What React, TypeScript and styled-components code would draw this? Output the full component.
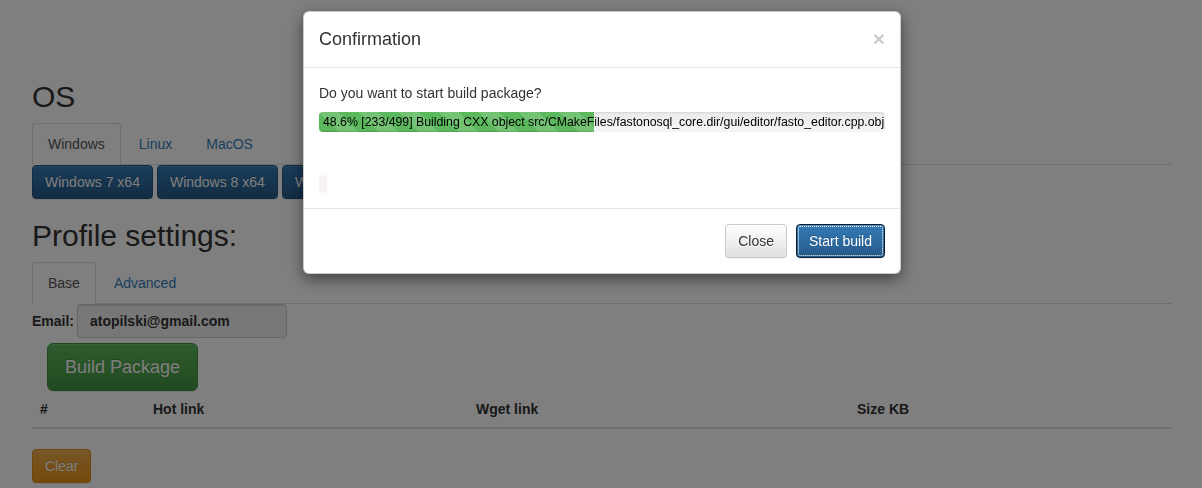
import React from "react";
import styled, { createGlobalStyle, css } from "styled-components";

const Global = createGlobalStyle`
  html, body { margin: 0; padding: 0; }
  body {
    font-family: "Liberation Sans", Arial, Helvetica, sans-serif;
    font-size: 14px;
    line-height: 1.42857143;
    color: #333;
    background: #fff;
    overflow: hidden;
  }
  * { box-sizing: border-box; }
`;

const Page = styled.div`
  padding-top: 60px;
  height: 488px;
`;

const Container = styled.div`
  width: 1140px;
  margin-left: 32px;
`;

const Heading = styled.h2`
  font-size: 30px;
  font-weight: 500;
  line-height: 1.1;
  margin: 20px 0 10px;
  color: #333;
`;

const Tabs = styled.ul`
  display: flex;
  list-style: none;
  margin: 0;
  padding: 0;
  border-bottom: 1px solid #ddd;
`;

const Tab = styled.li<{ $active?: boolean }>`
  margin-bottom: -1px;
  margin-right: 2px;
  padding: 10px 15px;
  line-height: 20px;
  border: 1px solid transparent;
  border-radius: 4px 4px 0 0;
  color: #337ab7;
  ${(p) =>
    p.$active &&
    css`
      color: #555;
      background: #fff;
      border-color: #ddd #ddd transparent;
    `}
`;

const Btn = styled.button<{ $variant: "primary" | "default" | "success" | "warning"; $lg?: boolean; $focus?: boolean }>`
  display: inline-block;
  font-family: inherit;
  font-size: ${(p) => (p.$lg ? "18px" : "14px")};
  line-height: ${(p) => (p.$lg ? "26px" : "20px")};
  padding: ${(p) => (p.$lg ? "10px 17px" : "6px 12px")};
  border-radius: ${(p) => (p.$lg ? "6px" : "4px")};
  border: 1px solid transparent;
  cursor: pointer;
  white-space: nowrap;
  text-shadow: 0 -1px 0 rgba(0, 0, 0, 0.2);
  box-shadow: inset 0 1px 0 rgba(255, 255, 255, 0.15), 0 1px 1px rgba(0, 0, 0, 0.075);
  color: #fff;
  ${(p) =>
    p.$variant === "primary" &&
    css`
      background-image: linear-gradient(to bottom, #337ab7 0, #265a88 100%);
      border-color: #245580;
    `}
  ${(p) =>
    p.$variant === "default" &&
    css`
      color: #333;
      text-shadow: 0 1px 0 #fff;
      background-image: linear-gradient(to bottom, #fff 0, #e0e0e0 100%);
      border-color: #ccc;
    `}
  ${(p) =>
    p.$variant === "success" &&
    css`
      background-image: linear-gradient(to bottom, #5cb85c 0, #419641 100%);
      border-color: #3e8f3e;
    `}
  ${(p) =>
    p.$variant === "warning" &&
    css`
      background-image: linear-gradient(to bottom, #f0ad4e 0, #eb9316 100%);
      border-color: #e38d13;
    `}
  ${(p) =>
    p.$focus &&
    css`
      outline: 1px dotted #fff;
      outline-offset: -3px;
      border-color: #0d1f33;
    `}
`;

const BtnRow = styled.div`
  display: flex;
  gap: 4px;
`;

const EmailRow = styled.div`
  display: flex;
  align-items: center;
  gap: 3px;
`;

const Label = styled.label`
  font-weight: bold;
`;

const Input = styled.input`
  width: 210px;
  height: 34px;
  padding: 6px 12px;
  font-family: inherit;
  font-size: 14px;
  font-weight: bold;
  color: #333;
  background: #eee;
  border: 1px solid #ccc;
  border-radius: 4px;
  box-shadow: inset 0 1px 1px rgba(0, 0, 0, 0.075);
`;

const BuildWrap = styled.div`
  padding: 5px 15px 0;
`;

const Table = styled.table`
  width: 100%;
  border-collapse: collapse;
  margin-bottom: 20px;
`;

const Th = styled.th<{ $w?: number }>`
  text-align: left;
  padding: 8px;
  line-height: 20px;
  border-bottom: 2px solid #ddd;
  width: ${(p) => (p.$w ? `${p.$w}px` : "auto")};
`;

const Backdrop = styled.div`
  position: fixed;
  inset: 0;
  background: rgba(0, 0, 0, 0.5);
`;

const Modal = styled.div`
  position: fixed;
  top: 11px;
  left: 50%;
  margin-left: -298px;
  width: 598px;
  background: #fff;
  border: 1px solid rgba(0, 0, 0, 0.2);
  border-radius: 6px;
  box-shadow: 0 5px 15px rgba(0, 0, 0, 0.5);
`;

const ModalHeader = styled.div`
  display: flex;
  align-items: flex-start;
  justify-content: space-between;
  padding: 15px;
  border-bottom: 1px solid #e5e5e5;
`;

const ModalTitle = styled.h4`
  margin: 0;
  font-size: 18px;
  font-weight: 500;
  line-height: 25px;
`;

const CloseX = styled.button`
  background: none;
  border: 0;
  padding: 0;
  margin-top: 1px;
  font-family: inherit;
  font-size: 21px;
  font-weight: bold;
  line-height: 1;
  color: #000;
  opacity: 0.2;
  text-shadow: 0 1px 0 #fff;
  cursor: pointer;
`;

const ModalBody = styled.div`
  padding: 15px;
`;

const Question = styled.p`
  margin: 0 0 9px;
`;

const Progress = styled.div`
  display: grid;
  height: 20px;
  margin-bottom: 20px;
  overflow: hidden;
  background: #f5f5f5;
  border-radius: 4px;
  background-image: linear-gradient(to bottom, #ebebeb 0, #f5f5f5 100%);
  box-shadow: inset 0 1px 2px rgba(0, 0, 0, 0.1);
`;

const Bar = styled.div`
  grid-area: 1 / 1;
  height: 20px;
  background-color: #5cb85c;
  background-image: linear-gradient(
    45deg,
    rgba(255, 255, 255, 0.15) 25%,
    transparent 25%,
    transparent 50%,
    rgba(255, 255, 255, 0.15) 50%,
    rgba(255, 255, 255, 0.15) 75%,
    transparent 75%,
    transparent
  );
  background-size: 40px 40px;
  box-shadow: inset 0 -1px 0 rgba(0, 0, 0, 0.15);
`;

const BarText = styled.span`
  grid-area: 1 / 1;
  padding-left: 4px;
  font-size: 12.3px;
  line-height: 20px;
  color: #000;
  white-space: nowrap;
`;

const CodeLine = styled.div`
  padding-top: 21px;
  line-height: 20px;
  height: 41px;
`;

const Code = styled.code`
  display: inline-block;
  vertical-align: middle;
  width: 8px;
  height: 18px;
  background: #f9f2f4;
  border-radius: 4px;
`;

const ModalFooter = styled.div`
  display: flex;
  justify-content: flex-end;
  gap: 9px;
  padding: 15px;
  border-top: 1px solid #e5e5e5;
`;

export default function App() {
  const percent = 48.6;
  return (
    <>
      <Global />
      <Page>
        <Container>
          <Heading>OS</Heading>
          <Tabs>
            <Tab $active>Windows</Tab>
            <Tab>Linux</Tab>
            <Tab>MacOS</Tab>
          </Tabs>
          <BtnRow>
            <Btn $variant="primary">Windows 7 x64</Btn>
            <Btn $variant="primary">Windows 8 x64</Btn>
            <Btn $variant="primary">Windows 10 x64</Btn>
          </BtnRow>
          <Heading>Profile settings:</Heading>
          <Tabs>
            <Tab $active>Base</Tab>
            <Tab>Advanced</Tab>
          </Tabs>
          <EmailRow>
            <Label>Email:</Label>
            <Input readOnly value="atopilski@gmail.com" />
          </EmailRow>
          <BuildWrap>
            <Btn $variant="success" $lg>
              Build Package
            </Btn>
          </BuildWrap>
          <Table>
            <thead>
              <tr>
                <Th $w={113}>#</Th>
                <Th $w={323}>Hot link</Th>
                <Th $w={381}>Wget link</Th>
                <Th>Size KB</Th>
              </tr>
            </thead>
          </Table>
          <Btn $variant="warning">Clear</Btn>
        </Container>
      </Page>
      <Backdrop />
      <Modal>
        <ModalHeader>
          <ModalTitle>Confirmation</ModalTitle>
          <CloseX>×</CloseX>
        </ModalHeader>
        <ModalBody>
          <Question>Do you want to start build package?</Question>
          <Progress>
            <Bar style={{ width: `${percent}%` }} />
            <BarText>
              48.6% [233/499] Building CXX object src/CMakeFiles/fastonosql_core.dir/gui/editor/fasto_editor.cpp.obj
            </BarText>
          </Progress>
          <CodeLine>
            <Code />
          </CodeLine>
        </ModalBody>
        <ModalFooter>
          <Btn $variant="default">Close</Btn>
          <Btn $variant="primary" $focus>
            Start build
          </Btn>
        </ModalFooter>
      </Modal>
    </>
  );
}
